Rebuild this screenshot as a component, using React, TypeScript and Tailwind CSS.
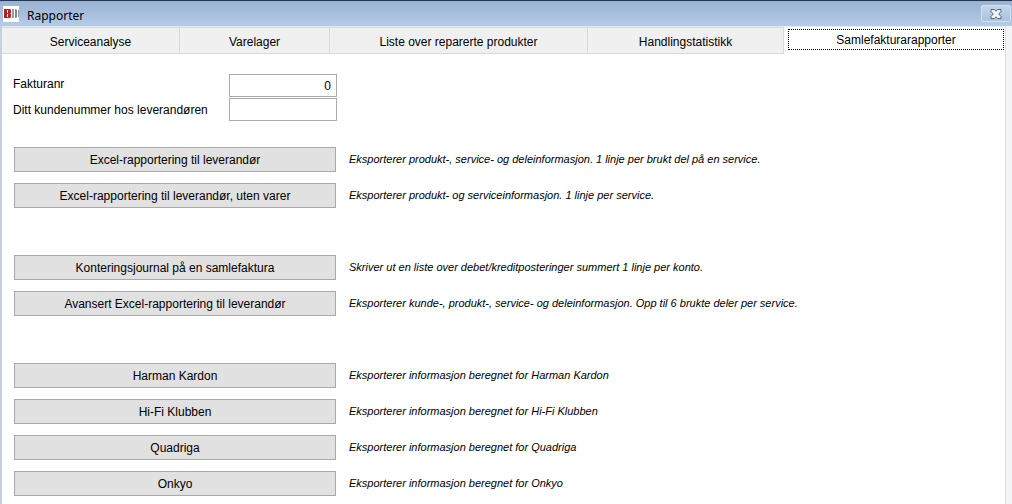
import { useState } from "react"

const tabs = [
  { name: "Serviceanalyse", width: "w-[178px]" },
  { name: "Varelager", width: "w-[150px]" },
  { name: "Liste over reparerte produkter", width: "w-[258px]" },
  { name: "Handlingstatistikk", width: "w-[196px]" },
  { name: "Samlefakturarapporter", width: "flex-1" },
]

const reportGroups = [
  [
    {
      name: "Excel-rapportering til leverandør",
      info: "Eksporterer produkt-, service- og deleinformasjon. 1 linje per brukt del på en service.",
    },
    {
      name: "Excel-rapportering til leverandør, uten varer",
      info: "Eksporterer produkt- og serviceinformasjon. 1 linje per service.",
    },
  ],
  [
    {
      name: "Konteringsjournal på en samlefaktura",
      info: "Skriver ut en liste over debet/kreditposteringer summert 1 linje per konto.",
    },
    {
      name: "Avansert Excel-rapportering til leverandør",
      info: "Eksporterer kunde-, produkt-, service- og deleinformasjon. Opp til 6 brukte deler per service.",
    },
  ],
  [
    { name: "Harman Kardon", info: "Eksporterer informasjon beregnet for Harman Kardon" },
    { name: "Hi-Fi Klubben", info: "Eksporterer informasjon beregnet for Hi-Fi Klubben" },
    { name: "Quadriga", info: "Eksporterer informasjon beregnet for Quadriga" },
    { name: "Onkyo", info: "Eksporterer informasjon beregnet for Onkyo" },
  ],
]

function AppLogo() {
  return (
    <svg width="16" height="16" viewBox="0 0 16 16" aria-hidden="true">
      <rect width="16" height="16" fill="#fff" />
      <path d="M1 3h3v9H1z" fill="#c4161c" />
      <path d="M4 3h3l1 1v3l-1 .5 1 .5v3l-1 1H4v-1h1V8H4V7h1V4H4z" fill="#b3262b" />
      <path d="M9 3h2v9H9z" fill="#a39c9a" />
      <path d="M12 3h1l1 1v7l-1 1h-1z" fill="#8c8785" />
      <path d="M15 4h1v7h-1z" fill="#9a9593" />
    </svg>
  )
}

function CloseIcon() {
  return (
    <svg width="12" height="10" viewBox="0 0 12 10" aria-hidden="true">
      <path
        d="M1 .5h3.500L6 2.200 7.500 .5H11v2L8.800 5 11 7.500v2H7.500L6 7.800 4.500 9.500H1v-2L3.200 5 1 2.500z"
        fill="#eef3f9"
        stroke="#5a6473"
        strokeWidth="1"
        strokeLinejoin="round"
      />
    </svg>
  )
}

export default function App() {
  const [activeTab, setActiveTab] = useState("Samlefakturarapporter")
  const [invoiceNo, setInvoiceNo] = useState("0")
  const [customerNo, setCustomerNo] = useState("")

  return (
    <div className="min-h-screen flex flex-col bg-white text-black text-[12px] leading-4 font-['Liberation_Sans',Arial,sans-serif]">
      <header className="h-[26px] flex items-center justify-between border-t border-[#26344f] bg-linear-to-b from-[#98b2d2] to-[#b5cce7] pl-[3px] pr-px">
        <div className="flex items-center gap-2">
          <AppLogo />
          <h1 className="pt-1 font-['Noto_Sans','Open_Sans',sans-serif] text-[12px]">Rapporter</h1>
        </div>
        <button
          type="button"
          aria-label="Lukk"
          className="w-[30px] h-[17px] flex items-center justify-center rounded-xs border border-[#d3e1f1] bg-linear-to-b from-[#c3d5ea] to-[#a9c3e1]"
        >
          <CloseIcon />
        </button>
      </header>

      <div className="flex-1 flex border-l-2 border-[#c5d1e0]">
        <main className="flex-1 border-r border-[#dcdcdc]">
          <div role="tablist" className="flex h-7 border-t border-[#e4ebf4]">
            {tabs.map((tab) => (
              <button
                key={tab.name}
                type="button"
                role="tab"
                aria-selected={activeTab === tab.name}
                onClick={() => setActiveTab(tab.name)}
                className={`${tab.width} ${
                  activeTab === tab.name
                    ? "bg-white pl-1 pr-px pt-[2px] pb-1"
                    : "bg-[#f0f0f0] border-t border-r border-b border-[#d9d9d9] pt-[2px]"
                }`}
              >
                {activeTab === tab.name ? (
                  <span className="flex h-full items-center justify-center border border-dotted border-black">
                    {tab.name}
                  </span>
                ) : (
                  tab.name
                )}
              </button>
            ))}
          </div>

          <div className="pl-[11px] pt-5 pb-2">
            <div className="flex flex-col gap-px">
              <div className="flex">
                <label htmlFor="invoice" className="w-[216px] pt-[2px]">
                  Fakturanr
                </label>
                <input
                  id="invoice"
                  className="w-[108px] h-[23px] border border-[#ababab] px-[5px] text-right outline-none"
                  value={invoiceNo}
                  onChange={(e) => setInvoiceNo(e.target.value)}
                />
              </div>
              <div className="flex">
                <label htmlFor="customer" className="w-[216px] pt-1">
                  Ditt kundenummer hos leverandøren
                </label>
                <input
                  id="customer"
                  className="w-[108px] h-[23px] border border-[#ababab] px-[5px] outline-none"
                  value={customerNo}
                  onChange={(e) => setCustomerNo(e.target.value)}
                />
              </div>
            </div>

            <div className="pl-px mt-[26px] flex flex-col gap-[47px]">
              {reportGroups.map((group) => (
                <div key={group[0].name} className="flex flex-col gap-[11px]">
                  {group.map((report) => (
                    <div key={report.name} className="flex items-center">
                      <button
                        type="button"
                        className="w-[322px] h-[25px] shrink-0 border border-[#a5a9ab] bg-[#e1e1e1]"
                      >
                        {report.name}
                      </button>
                      <p className="pl-[13px] pb-[2px] text-[11px] italic">{report.info}</p>
                    </div>
                  ))}
                </div>
              ))}
            </div>
          </div>
        </main>
        <div className="w-[6px] bg-[#f2f4f6]" />
      </div>
    </div>
  )
}
